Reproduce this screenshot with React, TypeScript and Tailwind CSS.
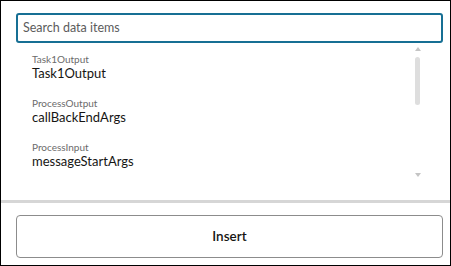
import React from 'react';

const items = [
  { label: 'Task1Output', name: 'Task1Output' },
  { label: 'ProcessOutput', name: 'callBackEndArgs' },
  { label: 'ProcessInput', name: 'messageStartArgs' },
];

export default function App() {
  return (
    <div
      className="w-[451px] h-[266px] border border-black bg-white flex flex-col text-[#161513]"
      style={{ fontFamily: 'Lato, "Noto Sans", Arial, sans-serif' }}
    >
      {/* search */}
      <div className="pt-[12px] pl-[15px] pr-[7px]">
        <div className="h-[30px] border-2 border-[#166f94] rounded-[3px] flex items-center px-[5px]">
          <input
            className="w-full outline-none bg-transparent text-[12.5px] placeholder:text-[#5c5c5c]"
            placeholder="Search data items"
          />
        </div>
      </div>

      {/* list */}
      <div className="h-[157px] flex">
        <div className="flex-1 pl-[31px]">
          {items.map((it) => (
            <div key={it.label + it.name} className="h-[44px] pt-[10px] flex flex-col">
              <span className="text-[10px] leading-[13px] text-[#6b6b6b]">{it.label}</span>
              <span className="text-[13px] leading-[15px]">{it.name}</span>
            </div>
          ))}
        </div>
        <div className="w-[5px] mr-[30px] flex flex-col items-center pt-[4px]">
          <div className="w-0 h-0 border-l-[3px] border-r-[3px] border-b-[4px] border-l-transparent border-r-transparent border-b-[#c4c4c4]" />
          <div className="w-[5px] h-[48px] mt-[6px] rounded-full bg-[#dedede]" />
          <div className="w-0 h-0 mt-[68px] border-l-[3px] border-r-[3px] border-t-[4px] border-l-transparent border-r-transparent border-t-[#c4c4c4]" />
        </div>
      </div>

      <div className="h-[3px] bg-[#d6d6d6]" />

      {/* action */}
      <div className="pt-[12px] pl-[15px] pr-[7px]">
        <button className="w-full h-[43px] border border-[#8c8c8c] rounded-[4px] bg-white text-[13.5px] font-semibold text-[#161513]">
          Insert
        </button>
      </div>
    </div>
  );
}
